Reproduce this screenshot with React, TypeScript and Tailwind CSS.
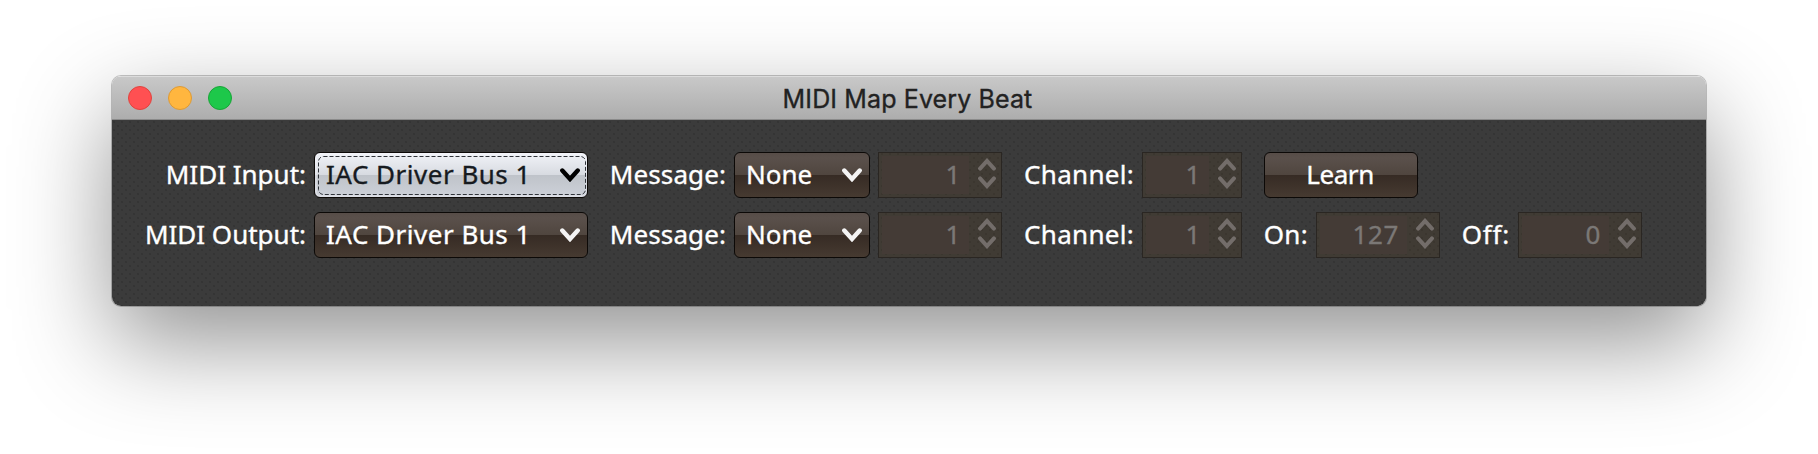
import React from "react";

const label = "flex justify-end whitespace-nowrap text-white -translate-y-px";

const weave =
  "bg-[#3b3b3b] bg-[radial-gradient(circle_at_2px_2px,#333333_0.5px,transparent_1.6px),radial-gradient(circle_at_6px_6px,#333333_0.5px,transparent_1.6px)] bg-[length:8px_8px]";

const gloss =
  "bg-[linear-gradient(180deg,#574d48_0%,#5a504b_12%,#50463f_49%,#362b24_50%,#463a31_100%)]";

function Chevron({ className, up = false }: { className: string; up?: boolean }) {
  return (
    <svg viewBox="0 0 20 14" className={className} fill="none" stroke="currentColor" strokeWidth="4.4" strokeLinecap="round">
      <path d={up ? "M2.3 11.5 10 3l7.7 8.5" : "M2.3 2.5 10 11l7.7-8.5"} />
    </svg>
  );
}

function Combo({ text, width, tracking, focused = false }: { text: string; width: string; tracking: string; focused?: boolean }) {
  return (
    <div
      className={`relative flex h-[46px] items-center justify-between rounded-[6px] border border-[#0c0907] pl-[11px] pr-[7px] ${width} ${
        focused
          ? "bg-[linear-gradient(180deg,#f1f3f8_0%,#d8dbe1_49%,#bfc3c9_50%,#cdd1d9_100%)] text-[#161a20] shadow-[inset_0_0_0_2px_rgba(245,247,252,0.35)]"
          : `${gloss} text-white`
      }`}
    >
      {focused && (
        <svg className="absolute left-[3px] top-[3px] h-[39px] w-[268px]" fill="none">
          <rect x=".5" y=".5" width="267" height="38" rx="5" stroke="#30343a" strokeDasharray="4 2" />
        </svg>
      )}
      <span className={`-translate-y-px whitespace-nowrap ${tracking}`}>{text}</span>
      <Chevron className={`h-[14px] w-[20px] ${focused ? "text-black" : "text-[#f4f4f4]"}`} />
    </div>
  );
}

function Spinner({ value, width }: { value: string; width: string }) {
  return (
    <div className={`flex h-[46px] border border-[#2a2622] bg-[#503c1e]/25 py-[3px] pl-[3px] ${width}`}>
      <div className="flex flex-1 items-center justify-end bg-[#443b36] pr-[8px] text-[#7b7876]">
        <span className="-translate-y-px tracking-[0.6px]">{value}</span>
      </div>
      <div className="flex w-[32px] flex-col items-center justify-center gap-[5px] pb-[3px] pl-[4px] text-[#736d6a]">
        <Chevron up className="h-[13px] w-[18px]" />
        <Chevron className="h-[13px] w-[18px]" />
      </div>
    </div>
  );
}

function Row({ output = false }: { output?: boolean }) {
  return (
    <div className="flex h-[46px] items-center">
      <div className={`${label} w-[194px]`}>{output ? "MIDI Output:" : "MIDI Input:"}</div>
      <div className="ml-[8px] flex">
        <Combo text="IAC Driver Bus 1" width="w-[274px]" tracking="tracking-[0.5px]" focused={!output} />
      </div>
      <div className={`${label} w-[138px] tracking-[0.1px]`}>Message:</div>
      <div className="ml-[8px] flex">
        <Combo text="None" width="w-[136px]" tracking="tracking-normal" />
      </div>
      <div className="ml-[8px] flex">
        <Spinner value="1" width="w-[124px]" />
      </div>
      <div className={`${label} w-[132px] tracking-[0.3px]`}>Channel:</div>
      <div className="ml-[8px] flex">
        <Spinner value="1" width="w-[100px]" />
      </div>
      {output ? (
        <>
          <div className={`${label} w-[66px] tracking-[0.3px]`}>On:</div>
          <div className="ml-[8px] flex">
            <Spinner value="127" width="w-[124px]" />
          </div>
          <div className={`${label} w-[70px] tracking-[0.8px]`}>Off:</div>
          <div className="ml-[8px] flex">
            <Spinner value="0" width="w-[124px]" />
          </div>
        </>
      ) : (
        <button className={`ml-[22px] h-[46px] w-[154px] rounded-[6px] border border-[#0c0907] pb-[2px] pr-[2px] tracking-[-0.4px] text-white ${gloss}`}>
          Learn
        </button>
      )}
    </div>
  );
}

export default function App() {
  return (
    <div className="h-[454px] w-[1818px] overflow-hidden bg-white pl-[112px] pt-[76px] font-['Noto_Sans',sans-serif] text-[26px] [-webkit-text-stroke:0.35px_currentColor]">
      <div className="h-[230px] w-[1594px] overflow-hidden rounded-[9px] shadow-[0_0_0_1px_rgba(0,0,0,0.22),0_36px_96px_rgba(0,0,0,0.43)]">
        <div className="grid h-[44px] grid-cols-[1fr_auto_1fr] items-center border-b border-t border-b-[#8a8a8a] border-t-[#dcdcdc] bg-[linear-gradient(180deg,#c8c8c8,#adadad)]">
          <div className="flex gap-[16px] pl-[16px]">
            <div className="size-[24px] rounded-full border border-[#e0443e] bg-[#ff5052]" />
            <div className="size-[24px] rounded-full border border-[#dd9a35] bg-[#ffb63f]" />
            <div className="size-[24px] rounded-full border border-[#18a537] bg-[#1dc84a]" />
          </div>
          <div className="translate-y-px pr-[3px] pt-px font-['Inter',sans-serif] text-[25px] font-normal tracking-[0.12px] text-[#222]">
            MIDI Map Every Beat
          </div>
        </div>
        <div className={`flex h-[186px] flex-col gap-[14px] pt-[32px] ${weave}`}>
          <Row />
          <Row output />
        </div>
      </div>
    </div>
  );
}
